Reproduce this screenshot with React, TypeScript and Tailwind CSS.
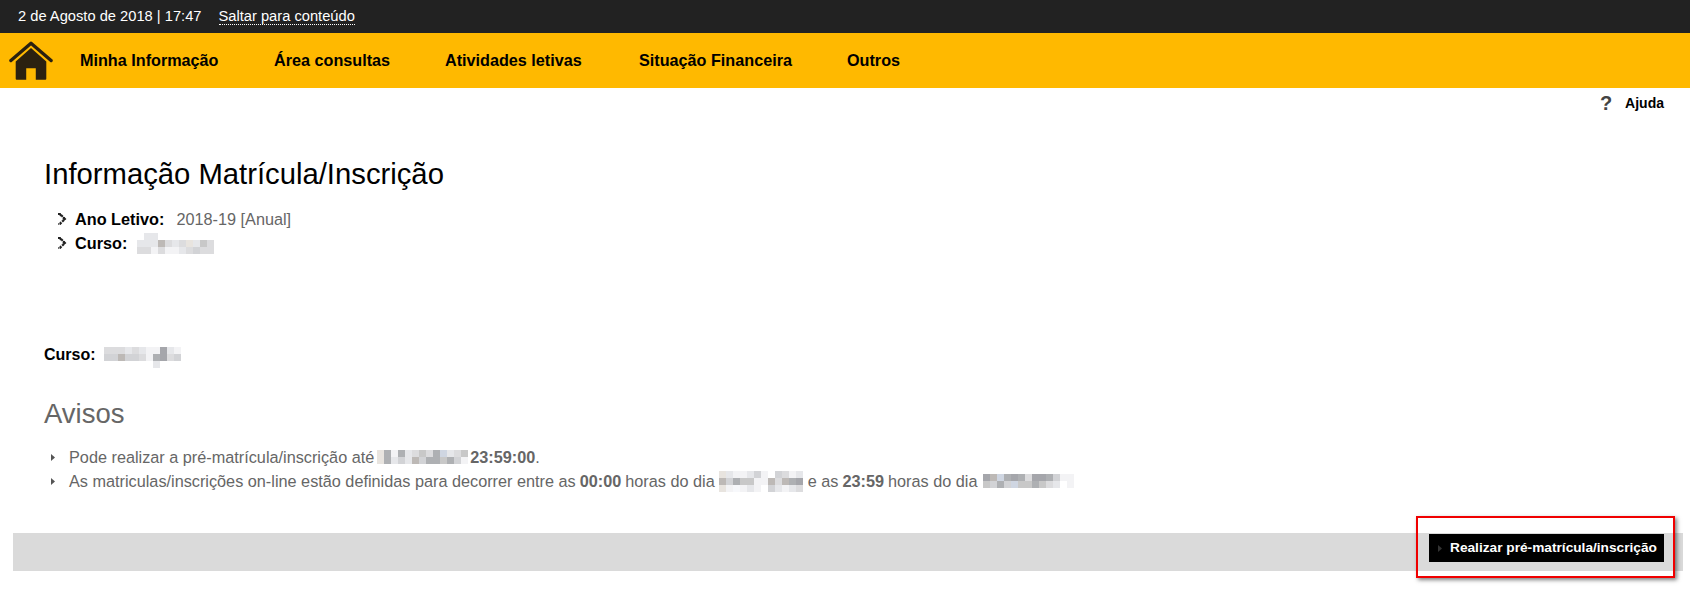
const pal: Record<string, string> = {
  a: "#ffffff", b: "#f3f3f5", c: "#e6e7ea", d: "#dcdcde", e: "#d2d3d6", f: "#c8c8c8",
  g: "#bdb9b6", h: "#aeb0b3", i: "#e8e4df", j: "#f7f8fb", k: "#a5a6ab", l: "#cfd6e2",
};

function Blur({ rows, className }: { rows: string[]; className: string }) {
  return (
    <span className={"inline-flex flex-col " + className}>
      {rows.map((row, i) => (
        <span key={i} className="flex h-[7px]">
          {row.split("").map((c, j) => (
            <span key={j} className="w-[7px] h-[7px]" style={{ backgroundColor: pal[c] }} />
          ))}
        </span>
      ))}
    </span>
  );
}

function Chevron() {
  return (
    <svg width="10" height="12" viewBox="0 0 10 12" className="shrink-0">
      <path d="M1 1 L3 1 L8 6 L3 11 L1 11 M3 1 L4 3 M8 6 L5 4 M8 6 L5 8 M3 11 L4 9" fill="none" stroke="#222" strokeWidth="2" strokeDasharray="2.5 1" />
    </svg>
  );
}

function Tri({ color }: { color: string }) {
  return (
    <svg width="4" height="7" viewBox="0 0 4 7" className="shrink-0">
      <path d="M0 0 L4 3.5 L0 7 Z" fill={color} />
    </svg>
  );
}

const nav = [
  { label: "Minha Informação", w: "w-[194px]" },
  { label: "Área consultas", w: "w-[171px]" },
  { label: "Atividades letivas", w: "w-[194px]" },
  { label: "Situação Financeira", w: "w-[208px]" },
  { label: "Outros", w: "w-auto" },
];

export default function App() {
  return (
    <div className="w-[1690px] h-[596px] overflow-hidden bg-white font-['Liberation_Sans',Arial,sans-serif]">
      <div className="h-[33px] bg-[#222222] flex items-center pl-[18px] text-[14.7px] text-white">
        <span>2 de Agosto de 2018 | 17:47</span>
        <span className="ml-[17px] leading-[15px] border-b border-dotted border-white">Saltar para conteúdo</span>
      </div>
      <div className="h-[55px] bg-[#ffb900] flex items-center">
        <svg width="44" height="41" viewBox="0 0 46 42" className="ml-[9px] mt-[1px] shrink-0">
          <path d="M2 20 L23 2 L44 20" fill="none" stroke="#2b2110" strokeWidth="3.5" strokeLinecap="round" strokeLinejoin="round" />
          <path d="M23 7 L39 21 V39 Q39 40 38 40 H28 V28 H18 V40 H8 Q7 40 7 39 V21 Z" fill="#2b2110" />
        </svg>
        <div className="flex ml-[27px] text-[16.2px] font-bold text-black">
          {nav.map((n) => (
            <span key={n.label} className={n.w}>{n.label}</span>
          ))}
        </div>
      </div>
      <div className="h-[30px] flex items-center justify-end pr-[26px]">
        <span className="text-[20px] font-bold text-[#444] mr-[13px] leading-none">?</span>
        <span className="text-[14px] font-bold text-black">Ajuda</span>
      </div>
      <div className="pl-[44px]">
        <h1 className="mt-[38px] text-[29.25px] leading-[36px] text-black">Informação Matrícula/Inscrição</h1>
        <ul className="mt-[15px] pl-[13px] text-[16.25px] leading-[24px]">
          <li className="flex items-center h-[24px]">
            <Chevron />
            <b className="ml-[8px] text-black">Ano Letivo:</b>
            <span className="ml-[12px] text-[#666666]">2018-19 [Anual]</span>
          </li>
          <li className="flex items-center h-[24px]">
            <Chevron />
            <b className="ml-[8px] text-black">Curso:</b>
            <Blur className="ml-[10px]" rows={["accaaaaaaaa", "cccgdcdicfd", "ddbdbbcdedd"]} />
          </li>
        </ul>
        <div className="mt-[88px] flex items-center h-[24px] text-[16px] font-bold text-black">
          <span>Curso:</span>
          <Blur className="ml-[8px] mt-[5px]" rows={["dddcdcbbkcb", "eegeedbhkde", "aaaaaaac"]} />
        </div>
        <h2 className="mt-[31px] text-[27.5px] leading-[32px] text-[#666666]">Avisos</h2>
        <ul className="mt-[15px] pl-[7px] text-[16.25px] leading-[24px] text-[#666666]">
          <li className="flex items-center h-[24px]">
            <Tri color="#555" />
            <span className="ml-[14px]">Pode realizar a pré-matrícula/inscrição até</span>
            <Blur className="ml-[3px] mr-[2px]" rows={["ihbhcdfdhlcdf", "ihcecgehhfheb"]} />
            <b>23:59:00</b>
            <span>.</span>
          </li>
          <li className="flex items-center h-[24px]">
            <Tri color="#555" />
            <span className="ml-[14px]">As matriculas/inscrições on-line estão definidas para decorrer entre as</span>
            <b className="ml-[4px]">00:00</b>
            <span className="ml-[4px]">horas do dia</span>
            <Blur className="ml-[4px]" rows={["icbbcebaedbc", "gehffbbgdghk", "ibjbcbaecbcd"]} />
            <span className="ml-[5px]">e as</span>
            <b className="ml-[4px]">23:59</b>
            <span className="ml-[4px]">horas do dia</span>
            <Blur className="ml-[6px]" rows={["kglhkhdkkhebb", "fehelffhfdcab"]} />
          </li>
        </ul>
      </div>
      <div className="relative mt-[40px] ml-[13px] w-[1670px] h-[38px] bg-[#dadada] flex justify-end items-start pt-[1px] pr-[19px]">
        <div className="w-[235px] h-[28px] bg-black flex items-center pl-[9px] text-[13.7px] font-bold text-white">
          <Tri color="#333" />
          <span className="ml-[8px] whitespace-nowrap">Realizar pré-matrícula/inscrição</span>
        </div>
        <div className="absolute left-[1403px] top-[-17px] w-[259px] h-[62px] border-2 border-[#f00000] shadow-[2px_2px_4px_rgba(0,0,0,0.5)]" />
      </div>
    </div>
  );
}
